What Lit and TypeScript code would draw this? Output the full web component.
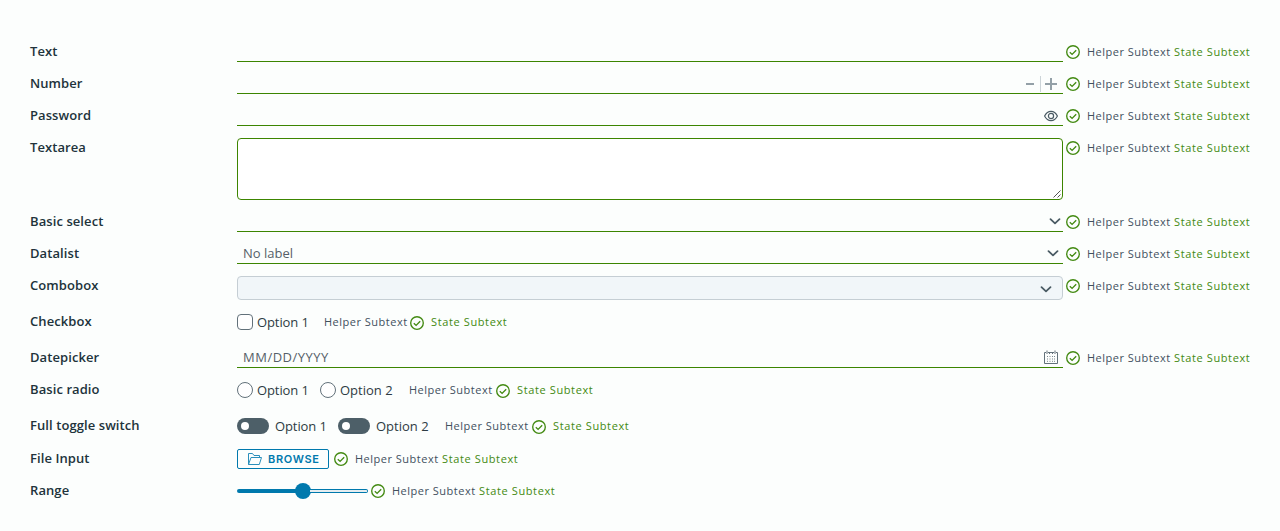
import { LitElement, html, css, svg, TemplateResult } from "lit";
import { customElement } from "lit/decorators.js";

const check = html`<svg class="check" width="14" height="14" viewBox="0 0 14 14">
  <circle cx="7" cy="7" r="6.3" /><path d="M3.8 7.2 6.1 9.4 10.2 5.2" />
</svg>`;
const chevron = html`<svg class="chev" width="12" height="8" viewBox="0 0 12 8"><path d="M1.5 2.200 6 6.300 10.500 2.200" /></svg>`;
const eye = html`<svg class="thin" width="14" height="12" viewBox="0 0 14 12">
  <path d="M.6 6C2 3.200 4.200 1.300 7 1.300S12 3.200 13.400 6C12 8.800 9.800 10.700 7 10.700S2 8.800.6 6Z" /><circle cx="7" cy="6" r="2.600" />
</svg>`;
const dots = [4.5, 7, 9.5, 11.5].flatMap((x) => [6.5, 9, 11.3].map((y) => svg`<rect x=${x - 0.5} y=${y - 0.5} width="1" height="1" />`));
const calendar = html`<svg class="cal" width="16" height="14" viewBox="0 0 16 14">
  <path d="M3 2.500H1.500V13.500H14.500V2.500H13M5 2.500H11M4 .5V4M12 .5V4M6.500 2V4M9.500 2V4" />${dots}
</svg>`;
const folder = html`<svg class="folder" width="16" height="14" viewBox="0 0 16 14">
  <path d="M1.500 12.500V1.500H5.500L7 3.500H12.500V5.500M1.500 12.500 4 5.500H14.500L12.300 12.500Z" />
</svg>`;
const helper = html`<span class="helper">Helper Subtext</span>`;
const state = html`<span class="state">State Subtext</span>`;

@customElement("app-root")
export class AppRoot extends LitElement {
  static styles = css`
    :host { display: block; box-sizing: border-box; height: 531px; padding: 36px 30px 0; background: #fcfefd; color: #21333b; font: 13px/32px "Open Sans", sans-serif; overflow: hidden; }
    .row { display: grid; grid-template-columns: 207px 1fr; height: 32px; align-items: start; }
    .h33 { height: 33px; }
    .h36 { height: 36px; }
    .h74 { height: 74px; }
    .label { font-weight: 600; line-height: 31px; letter-spacing: .08px; white-space: nowrap; }
    .body { display: flex; align-items: flex-start; height: 32px; white-space: nowrap; }
    .body > svg { flex: none; }
    .field { display: flex; box-sizing: border-box; align-items: center; width: 826px; height: 24px; margin-top: 2px; border-bottom: 1px solid #3c8500; padding: 3px 5px 0 6px; color: #565f68; line-height: 20px; }
    .fill { flex: 1; }
    .tight { padding-right: 2px; }
    .list { padding-right: 4px; }
    .date { letter-spacing: .5px; }
    .raised { padding-top: 5px; }
    .combo { border: 1px solid #c5ced4; border-radius: 4px; background: #f1f6f9; margin-top: 6px; padding: 2px 10px 0 6px; }
    .area { width: 826px; height: 62px; box-sizing: border-box; margin-top: 6px; border: 1px solid #3c8500; border-radius: 4px; background: #fff; display: flex; justify-content: flex-end; align-items: flex-end; }
    .check { margin: 9px 7px 0 3px; fill: none; stroke: #438a12; stroke-width: 1.35; }
    .helper, .state { display: block; font-size: 11px; letter-spacing: .5px; color: #42505d; }
    .helper { width: 87px; }
    .state { color: #438a12; letter-spacing: .62px; }
    .chev { fill: none; stroke: #4a5b64; stroke-width: 1.8; stroke-linecap: round; stroke-linejoin: round; }
    .thin { fill: none; stroke: #4a5b64; stroke-width: 1.2; }
    .cal path { fill: none; stroke: #62717a; }
    .cal rect { fill: #7b888f; }
    .grip path { stroke: #555; fill: none; }
    .steps path { stroke: #93a0a7; stroke-width: 2; }
    .steps .bar { stroke: #ccd4d8; stroke-width: 1; }
    .opt { display: flex; align-items: center; height: 31px; color: #2d3b43; margin-right: 12px; }
    .opt .otext { width: 51px; letter-spacing: -.1px; line-height: 30px; }
    .opt + .opt .otext { width: 53px; letter-spacing: 0; }
    .box, .radio { box-sizing: border-box; width: 16px; height: 16px; border: 1px solid #62717a; border-radius: 4px; margin-right: 4px; background: #fff; }
    .radio { border-radius: 50%; }
    .switch { box-sizing: border-box; width: 32px; height: 16px; border-radius: 8px; background: #4d5f68; padding: 4px; margin-right: 6px; }
    .knob { width: 8px; height: 8px; border-radius: 50%; background: #fff; }
    .inline .helper { width: 86px; margin-left: 4px; }
    .inline .check { margin: 10px 7px 0 1px; }
    .single .check { margin-left: 0; }
    .browse { display: flex; align-items: center; box-sizing: border-box; width: 92px; height: 20px; margin: 6px 2px 0 0; border: 1px solid #0079ad; border-radius: 2px; padding-left: 9px; gap: 5px; color: #0079ad; font: 600 11px/18px Inter, sans-serif; letter-spacing: .65px; }
    .folder { fill: none; stroke: #2a8fbb; }
    .range { display: flex; align-items: center; width: 131px; height: 16px; margin-top: 8px; }
    .done { width: 59px; height: 4px; border-radius: 2px 0 0 2px; background: #0079ad; }
    .thumb { width: 16px; height: 16px; border-radius: 50%; background: #0079ad; margin: 0 -1px; }
    .rest { box-sizing: border-box; flex: 1; height: 4px; border: 1px solid #0079ad; border-left: 0; border-radius: 0 2px 2px 0; background: #e5edf0; }
  `;

  row(label: string, body: TemplateResult, size = "", kind = "") {
    return html`<div class="row ${size}"><div class="label">${label}</div><div class="body ${kind}">${body}</div></div>`;
  }
  field(label: string, kind: string, text: string, icon: unknown, size = "") {
    return this.row(label, html`<div class="field ${kind}"><span class="fill">${text}</span>${icon}</div>${check}${helper}${state}`, size);
  }
  option(shape: string, text: string) {
    return html`<div class="opt"><span class=${shape}>${shape === "switch" ? html`<div class="knob"></div>` : ""}</span><span class="otext">${text}</span></div>`;
  }
  render() {
    const subtext = html`${check}${helper}${state}`;
    const inlineSubtext = html`${helper}${check}${state}`;
    return html`
      ${this.field("Text", "", "", "")}
      ${this.field("Number", "raised", "", html`<svg class="steps" width="32" height="16" viewBox="0 0 32 16"><path d="M0 8H8M19 8H31M25 2V14" /><path class="bar" d="M14.500 0V16" /></svg>`)}
      ${this.field("Password", "raised", "", eye)}
      ${this.row("Textarea", html`<div class="area"><svg class="grip" width="9" height="9" viewBox="0 0 9 9"><path d="M.5 7.500 7.500.5M4.500 7.500 7.500 4.500" /></svg></div>${subtext}`, "h74")}
      ${this.field("Basic select", "tight", "", chevron)}
      ${this.field("Datalist", "list", "No label", chevron)}
      ${this.field("Combobox", "combo", "", chevron, "h36")}
      ${this.row("Checkbox", html`${this.option("box", "Option 1")}${inlineSubtext}`, "h36", "inline single")}
      ${this.field("Datepicker", "list date", "MM/DD/YYYY", calendar)}
      ${this.row("Basic radio", html`${this.option("radio", "Option 1")}${this.option("radio", "Option 2")}${inlineSubtext}`, "h36", "inline")}
      ${this.row("Full toggle switch", html`${this.option("switch", "Option 1")}${this.option("switch", "Option 2")}${inlineSubtext}`, "h33", "inline")}
      ${this.row("File Input", html`<div class="browse">${folder}<span>BROWSE</span></div>${subtext}`)}
      ${this.row("Range", html`<div class="range"><div class="done"></div><div class="thumb"></div><div class="rest"></div></div>${subtext}`)}
    `;
  }
}
